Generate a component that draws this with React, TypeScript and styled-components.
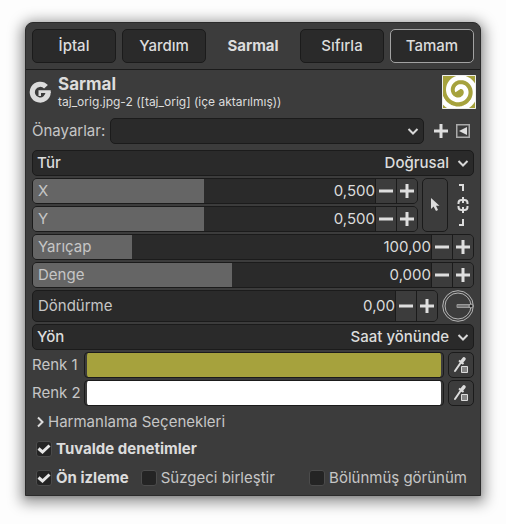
import React, { useState } from "react";
import styled, { createGlobalStyle, css } from "styled-components";

const GlobalStyle = createGlobalStyle`
  *, *::before, *::after { box-sizing: border-box; }
  body {
    margin: 0;
    background: #fdfdfd;
    color: #dcdcdc;
    font: 400 15px/20px Inter, "Noto Sans", sans-serif;
  }
  button, input, select { font: inherit; color: inherit; margin: 0; padding: 0; }
  svg { flex: none; display: block; }
`;

const line = "#1b1b1b";
const face = "#3c3c3c";
const well = "#2a2a2a";
const dim = "#c6c6c6";

const Dialog = styled.main`
  margin: 22px 25px 28px;
  background: ${face};
  border: 1px solid #2b2b2b;
  border-radius: 8px 8px 0 0;
  box-shadow: 0 3px 14px 4px rgba(0, 0, 0, 0.4), 0 2px 4px rgba(0, 0, 0, 0.15);
`;

const HeaderBar = styled.header`
  display: grid;
  grid-template-columns: 84px 84px 1fr 84px 84px;
  align-items: center;
  gap: 6px;
  padding: 6px;
  border-bottom: 1px solid ${line};
`;

const HeaderTitle = styled.h1`
  margin: 0;
  font-size: 15px;
  font-weight: 700;
  text-align: center;
`;

const DialogButton = styled.button<{ $primary?: boolean }>`
  height: 34px;
  border: 1px solid ${(p) => (p.$primary ? "#a2a2a2" : line)};
  border-radius: 5px;
  background: ${well};
  font-weight: 500;
`;

const FilterInfo = styled.section`
  display: flex;
  align-items: center;
  gap: 6px;
  padding: 4px 4px 0 3px;
`;

const FilterText = styled.div`
  flex: 1;
  min-width: 0;
`;

const FilterName = styled.h2`
  margin: 0;
  font-size: 17px;
  line-height: 20px;
  font-weight: 700;
`;

const LayerName = styled.p`
  margin: 0;
  font-size: 12px;
  line-height: 16px;
`;

const Body = styled.div`
  display: flex;
  flex-direction: column;
  gap: 6px;
  padding: 8px 6px 7px;
`;

const Row = styled.div`
  display: flex;
  align-items: center;
  gap: 4px;
`;

const PresetRow = styled(Row)`
  gap: 5px;
  color: ${dim};
`;

const Stack = styled.div`
  display: flex;
  flex-direction: column;
  gap: 2px;
`;

const GrowStack = styled(Stack)`
  flex: 1;
  min-width: 0;
`;

const Combo = styled.div`
  flex: 1;
  display: grid;
  align-items: center;
  height: 26px;
  border: 1px solid ${line};
  border-radius: 5px;
  background: ${well};
  color: #dcdcdc;
  font-weight: 500;
  > * { grid-area: 1 / 1; }
  > label { padding-left: 4px; pointer-events: none; z-index: 1; }
  > svg { justify-self: end; margin-right: 4px; pointer-events: none; }
`;

const ComboStack = styled(Combo)`
  flex: none;
`;

const Select = styled.select`
  appearance: none;
  width: 100%;
  height: 24px;
  padding-right: 24px;
  border: 0;
  background: transparent;
  text-align-last: right;
`;

const FlatButton = styled.button`
  display: grid;
  place-items: center;
  width: 16px;
  height: 20px;
  border: 0;
  background: transparent;
`;

const PresetTools = styled.div`
  display: flex;
  gap: 6px;
  padding: 0 3px 0 4px;
`;

const Spin = styled.div<{ $tall?: boolean }>`
  flex: 1;
  min-width: 0;
  display: flex;
  height: ${(p) => (p.$tall ? 32 : 26)}px;
  border: 1px solid ${line};
  border-radius: 5px;
  background: ${well};
  overflow: hidden;
`;

const SpinBlock = styled(Spin)`
  flex: none;
`;

const Track = styled.div`
  flex: 1;
  min-width: 0;
  display: grid;
  grid-template-columns: 1fr 64px;
  align-items: center;
`;

const TrackLabel = styled.label`
  grid-area: 1 / 1;
  z-index: 1;
  padding-left: 5px;
  color: ${dim};
  pointer-events: none;
`;

const Range = styled.input<{ $fill: number }>`
  grid-area: 1 / 1 / 2 / 3;
  appearance: none;
  width: 100%;
  height: 100%;
  background: linear-gradient(to right, #656565 ${(p) => p.$fill}%, transparent ${(p) => p.$fill}%);
  &::-webkit-slider-thumb { appearance: none; width: 1px; height: 24px; background: transparent; }
`;

const Value = styled.input`
  grid-area: 1 / 2;
  z-index: 1;
  width: 100%;
  border: 0;
  background: transparent;
  text-align: right;
`;

const StepButton = styled.button`
  display: grid;
  place-items: center;
  width: 21px;
  border: 0;
  border-left: 1px solid ${line};
  background: ${face};
`;

const toolButton = css`
  display: grid;
  place-items: center;
  width: 26px;
  border: 1px solid ${line};
  border-radius: 5px;
  background: ${face};
`;

const PickButton = styled.button`
  ${toolButton}
  height: 54px;
`;

const LinkButton = styled.button`
  display: grid;
  place-items: center;
  width: 22px;
  height: 54px;
  border: 0;
  background: transparent;
`;

const DropperButton = styled.button`
  ${toolButton}
  height: 26px;
`;

const ColorRow = styled.div`
  display: grid;
  grid-template-columns: 48px 1fr 26px;
  align-items: center;
  column-gap: 4px;
  color: ${dim};
  white-space: nowrap;
`;

const Swatch = styled.button<{ $color: string }>`
  height: 26px;
  padding: 0 2px;
  border: 1px solid ${line};
  border-radius: 4px;
  background: linear-gradient(${(p) => p.$color}, ${(p) => p.$color}) content-box, ${face};
`;

const Expander = styled.button`
  display: flex;
  align-items: center;
  gap: 3px;
  padding: 0 4px;
  border: 0;
  background: transparent;
  color: ${dim};
`;

const Options = styled.div`
  display: flex;
  flex-direction: column;
  gap: 9px;
  padding-top: 1px;
`;

const CheckRow = styled.div`
  display: flex;
  gap: 12px;
  padding: 0 7px 0 4px;
  white-space: nowrap;
  > :nth-child(3) { margin-left: auto; }
`;

const CheckLabel = styled.label<{ $on: boolean }>`
  display: flex;
  align-items: center;
  gap: 4px;
  color: ${(p) => (p.$on ? "#dcdcdc" : dim)};
  font-weight: ${(p) => (p.$on ? 700 : 400)};
`;

const Box = styled.span`
  display: grid;
  width: 16px;
  height: 16px;
  > * { grid-area: 1 / 1; }
  > svg { z-index: 1; place-self: center; pointer-events: none; }
`;

const BoxInput = styled.input`
  appearance: none;
  width: 16px;
  height: 16px;
  border: 1px solid #4b4b4b;
  border-radius: 3px;
  background: #242424;
`;

const Chevron = () => (
  <svg width="12" height="12" viewBox="0 0 12 12" fill="none" stroke="#d8d8d8" strokeWidth="2">
    <path d="M1.5 4 6 8.5 10.5 4" />
  </svg>
);

const Minus = () => (
  <svg width="14" height="14" viewBox="0 0 14 14"><path d="M0 5.5h14v3H0z" fill="#dedede" /></svg>
);

const Plus = () => (
  <svg width="14" height="14" viewBox="0 0 14 14">
    <path d="M0 5.5h5.5V0h3v5.5H14v3H8.5V14h-3V8.5H0z" fill="#dedede" />
  </svg>
);

const GeglLogo = () => (
  <svg width="23" height="23" viewBox="0 0 23 23" fill="none">
    <path d="M17 5.8A7.9 7.9 0 1 0 19.1 10.8" stroke="#dcdcdc" strokeWidth="5.2" />
    <path d="M9.5 9.2h12.2v2.8H12v3H9.5z" fill="#dcdcdc" />
  </svg>
);

const spiral = (() => {
  const pts: string[] = [];
  for (let i = 0; i <= 120; i++) {
    const turn = (i / 120) * 1.95;
    const angle = (turn - 0.5) * 2 * Math.PI;
    const r = 2 + 9 * turn;
    pts.push(`${(17.5 + r * Math.cos(angle)).toFixed(2)} ${(16 + r * Math.sin(angle)).toFixed(2)}`);
  }
  return "M" + pts.join("L");
})();

const SpiralPreview = () => (
  <svg width="34" height="34" viewBox="0 0 34 34" fill="none">
    <path d="M0 0h34v34H0z" fill="#a6a23d" />
    <path d={spiral} stroke="#fff" strokeWidth="4.8" />
    <path d="M.5.5h33v33H.5z" stroke="#eee" />
  </svg>
);

const PresetMenuIcon = () => (
  <svg width="14" height="14" viewBox="0 0 14 14" fill="none">
    <path d="M.75.75h12.5v12.5H.75z" stroke="#aaa" strokeWidth="1.5" />
    <path d="M11 3v8L3 7z" fill="#dedede" />
  </svg>
);

const PointerIcon = () => (
  <svg width="10" height="14" viewBox="0 0 10 14" fill="#dcdcdc">
    <path d="M1 0v11l2.6-2.4L6 13l2-1-2-4.2h3.5z" />
  </svg>
);

const LinkIcon = () => (
  <svg width="12" height="44" viewBox="0 0 12 44" fill="none" stroke="#dcdcdc" strokeWidth="2">
    <path d="M2 2h4v6M2 42h4v-6" />
    <path d="M1.5 21v-1q0-3 3-3h3q3 0 3 3v1M1.5 23v1q0 3 3 3h3q3 0 3-3v-1M6 14v6M6 24v6" />
  </svg>
);

const DropperIcon = () => (
  <svg width="16" height="18" viewBox="0 0 16 18" fill="none">
    <path d="M2 15 7.5 7" stroke="#dcdcdc" strokeWidth="2" strokeLinecap="round" />
    <path d="m6 4.5 4.5 3.5" stroke="#dcdcdc" strokeWidth="2" />
    <path d="m8.5 6 2.5-3.2" stroke="#dcdcdc" strokeWidth="3.5" strokeLinecap="round" />
    <path d="M8.5 10.5h6v6h-6z" fill="#858585" stroke="#dcdcdc" />
  </svg>
);

const DialIcon = () => (
  <svg width="32" height="32" viewBox="0 0 32 32" fill="none" stroke="#b5b5b5">
    <circle cx="16" cy="16" r="15.3" />
    <circle cx="16" cy="16" r="13" />
    <path d="M15 14.5h13v3H15z" fill="#777" stroke="#999" />
    <circle cx="29" cy="16" r="2" fill="#222" />
  </svg>
);

const CheckIcon = () => (
  <svg width="14" height="10" viewBox="0 0 14 10" fill="none" stroke="#e6e6e6" strokeWidth="3">
    <path d="m1.5 4.5 4 3.5L12.5 1.5" />
  </svg>
);

type ScaleProps = { id: string; label: string; value: string; fill: number; tall?: boolean; block?: boolean };

function Scale({ id, label, value, fill, tall, block }: ScaleProps) {
  const Frame = block ? SpinBlock : Spin;
  return (
    <Frame $tall={tall}>
      <Track>
        {fill > 0 && <Range type="range" aria-label={label} $fill={fill} defaultValue={fill} />}
        <TrackLabel htmlFor={id}>{label}</TrackLabel>
        <Value id={id} defaultValue={value} />
      </Track>
      <StepButton aria-label={`${label} azalt`}><Minus /></StepButton>
      <StepButton aria-label={`${label} artır`}><Plus /></StepButton>
    </Frame>
  );
}

function Choice({ id, label, value }: { id: string; label: string; value: string }) {
  return (
    <ComboStack>
      <label htmlFor={id}>{label}</label>
      <Select id={id}><option>{value}</option></Select>
      <Chevron />
    </ComboStack>
  );
}

function ColorField({ id, label, color }: { id: string; label: string; color: string }) {
  return (
    <ColorRow>
      <label htmlFor={id}>{label}</label>
      <Swatch id={id} $color={color} />
      <DropperButton aria-label={`${label} seç`}><DropperIcon /></DropperButton>
    </ColorRow>
  );
}

function Check({ label, initial = false }: { label: string; initial?: boolean }) {
  const [on, setOn] = useState(initial);
  return (
    <CheckLabel $on={on}>
      <Box>
        <BoxInput type="checkbox" checked={on} onChange={() => setOn(!on)} />
        {on && <CheckIcon />}
      </Box>
      {label}
    </CheckLabel>
  );
}

export default function App() {
  return (
    <>
      <GlobalStyle />
      <Dialog>
        <HeaderBar>
          <DialogButton>İptal</DialogButton>
          <DialogButton>Yardım</DialogButton>
          <HeaderTitle>Sarmal</HeaderTitle>
          <DialogButton>Sıfırla</DialogButton>
          <DialogButton $primary>Tamam</DialogButton>
        </HeaderBar>
        <FilterInfo>
          <GeglLogo />
          <FilterText>
            <FilterName>Sarmal</FilterName>
            <LayerName>taj_orig.jpg-2 ([taj_orig] (içe aktarılmış))</LayerName>
          </FilterText>
          <SpiralPreview />
        </FilterInfo>
        <Body>
          <PresetRow>
            <label htmlFor="presets">Önayarlar:</label>
            <Combo>
              <Select id="presets"><option></option></Select>
              <Chevron />
            </Combo>
            <PresetTools>
              <FlatButton aria-label="Önayar ekle"><Plus /></FlatButton>
              <FlatButton aria-label="Önayar menüsü"><PresetMenuIcon /></FlatButton>
            </PresetTools>
          </PresetRow>
          <Stack>
            <Choice id="type" label="Tür" value="Doğrusal" />
            <Row>
              <GrowStack>
                <Scale id="x" label="X" value="0,500" fill={50} block />
                <Scale id="y" label="Y" value="0,500" fill={50} block />
              </GrowStack>
              <PickButton aria-label="Konum seç"><PointerIcon /></PickButton>
              <LinkButton aria-label="Bağla"><LinkIcon /></LinkButton>
            </Row>
            <Scale id="radius" label="Yarıçap" value="100,00" fill={25} block />
            <Scale id="balance" label="Denge" value="0,000" fill={50} block />
            <Row>
              <Scale id="rotation" label="Döndürme" value="0,00" fill={0} tall />
              <DialIcon />
            </Row>
            <Choice id="direction" label="Yön" value="Saat yönünde" />
            <ColorField id="color1" label="Renk 1" color="#a6a23d" />
            <ColorField id="color2" label="Renk 2" color="#fff" />
          </Stack>
          <Expander>
            <svg width="9" height="12" viewBox="0 0 9 12" fill="none" stroke="#dcdcdc" strokeWidth="2">
              <path d="m2 1.5 4.5 4.5L2 10.5" />
            </svg>
            Harmanlama Seçenekleri
          </Expander>
          <Options>
            <CheckRow><Check label="Tuvalde denetimler" initial /></CheckRow>
            <CheckRow>
              <Check label="Ön izleme" initial />
              <Check label="Süzgeci birleştir" />
              <Check label="Bölünmüş görünüm" />
            </CheckRow>
          </Options>
        </Body>
      </Dialog>
    </>
  );
}
